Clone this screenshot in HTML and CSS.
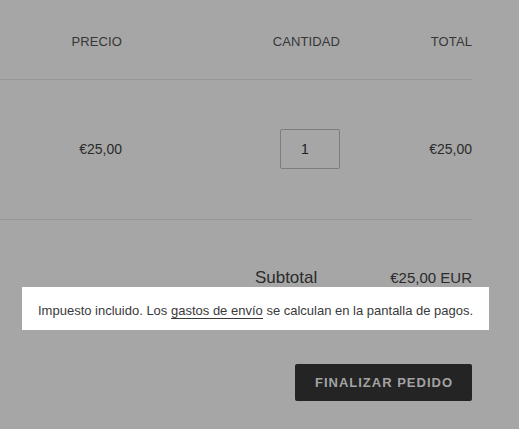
FILE: index.html
```html
<!DOCTYPE html>
<html lang="es">
<head>
<meta charset="utf-8">
<title>Carrito</title>
<link rel="stylesheet" href="styles.css">
</head>
<body>
<div class="cart">
  <div class="row head">
    <div class="cell">PRECIO</div>
    <div class="cell">CANTIDAD</div>
    <div class="cell">TOTAL</div>
  </div>
  <div class="row item">
    <div class="cell price">€25,00</div>
    <div class="cell"><div class="qty">1</div></div>
    <div class="cell price">€25,00</div>
  </div>
  <div class="subtotal">
    <span class="sub-label">Subtotal</span>
    <span class="sub-value">€25,00 EUR</span>
  </div>
  <p class="note">Impuesto incluido. Los <a href="#" class="link">gastos de envío</a> se calculan en la pantalla de pagos.</p>
  <div class="actions">
    <button class="checkout">FINALIZAR PEDIDO</button>
  </div>
</div>
</body>
</html>
```
FILE: styles.css
```css
html, body {
  margin: 0;
  padding: 0;
  background: #a6a6a6;
  font-family: "Liberation Sans", Arial, sans-serif;
  color: #2b2b2b;
}

.cart {
  width: 472px;
}

.row {
  display: grid;
  grid-template-columns: 122px 218px 132px;
  border-bottom: 1px solid #979797;
}

.cell {
  text-align: right;
}

.head {
  padding: 34px 0 29px;
  font-size: 13px;
  line-height: 16px;
  color: #363636;
  letter-spacing: 0.1px;
}

.item {
  padding: 49px 0 50px;
  align-items: center;
  font-size: 14px;
}

.price {
  line-height: 40px;
}

.qty {
  margin-left: auto;
  width: 60px;
  height: 40px;
  box-sizing: border-box;
  border: 1px solid #7d7d7d;
  border-radius: 2px;
  padding-left: 20px;
  text-align: left;
  line-height: 38px;
  font-size: 14px;
  color: #222;
}

.subtotal {
  margin-top: 48px;
  display: flex;
  justify-content: flex-end;
  align-items: baseline;
  gap: 73px;
  line-height: 19px;
}

.sub-label {
  font-size: 17px;
}

.sub-value {
  font-size: 15px;
}

.note {
  margin: 0 0 0 22px;
  width: 467px;
  box-sizing: border-box;
  padding: 15px 18px 10px 16px;
  background: #ffffff;
  font-size: 13px;
  line-height: 18px;
  text-align: right;
  color: #3a3a3a;
  white-space: nowrap;
}

.link {
  color: #3a3a3a;
  text-decoration: none;
  border-bottom: 1px solid #3a3a3a;
}

.actions {
  margin-top: 34px;
  display: flex;
  justify-content: flex-end;
}

.checkout {
  height: 37px;
  width: 177px;
  padding: 0;
  border: none;
  border-radius: 2px;
  background: #242424;
  color: #a3a3a3;
  font-family: "Liberation Sans", Arial, sans-serif;
  font-weight: bold;
  font-size: 13px;
  letter-spacing: 1px;
  text-indent: 1px;
}
```
